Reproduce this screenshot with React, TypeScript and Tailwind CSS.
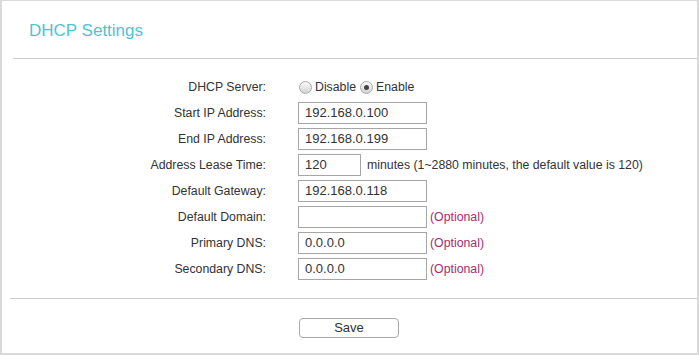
import React from "react";

const rows: { label: string; value?: string; width?: string; note?: string; optional?: boolean }[] = [
    { label: "Start IP Address:", value: "192.168.0.100" },
    { label: "End IP Address:", value: "192.168.0.199" },
    {
        label: "Address Lease Time:",
        value: "120",
        width: "w-[63px]",
        note: "minutes (1~2880 minutes, the default value is 120)",
    },
    { label: "Default Gateway:", value: "192.168.0.118" },
    { label: "Default Domain:", value: "", optional: true },
    { label: "Primary DNS:", value: "0.0.0.0", optional: true },
    { label: "Secondary DNS:", value: "0.0.0.0", optional: true },
];

const Radio = ({ checked }: { checked?: boolean }) => (
    <span className="inline-flex h-[13px] w-[13px] items-center justify-center rounded-full border border-[#a9a9a9] bg-gradient-to-b from-[#fafafa] to-[#d4d4d4]">
        {checked && <span className="h-[5px] w-[5px] rounded-full bg-[#444]" />}
    </span>
);

const App = () => {
    return (
        <div
            className="flex h-[355px] w-[699px] flex-col border-x-2 border-b-2 border-t border-[#dadada] bg-white text-[12.3px] text-[#333]"
            style={{ fontFamily: '"Liberation Sans", Arial, sans-serif' }}
        >
            <h2 className="h-[57px] pl-[27px] pt-[21px] text-[17px] leading-[18px] text-[#4ec4d3]">
                DHCP Settings
            </h2>
            <div className="ml-[11px] h-px bg-[#cccccc]" />

            <div className="mt-[15px] flex flex-col">
                <div className="flex h-[26px] items-center">
                    <div className="w-[264px] text-right">DHCP Server:</div>
                    <div className="ml-[33px] flex items-center">
                        <Radio />
                        <span className="ml-[3px]">Disable</span>
                        <span className="ml-[4px] flex items-center">
                            <Radio checked />
                        </span>
                        <span className="ml-[3px]">Enable</span>
                    </div>
                </div>
                {rows.map((row) => (
                    <div key={row.label} className="flex h-[26px] items-center">
                        <div className="w-[264px] text-right">{row.label}</div>
                        <div
                            className={`ml-[32px] flex h-[22px] items-center border border-[#a6a6a6] px-[6px] text-[13px] ${row.width ?? "w-[129px]"}`}
                        >
                            {row.value}
                        </div>
                        {row.note && <span className="ml-[6px]">{row.note}</span>}
                        {row.optional && (
                            <span className="ml-[3px] text-[#a3306c]">(Optional)</span>
                        )}
                    </div>
                ))}
            </div>

            <div className="ml-[8px] mt-[16px] h-px bg-[#cccccc]" />

            <div className="mt-[19px] pl-[297px]">
                <button className="flex h-[20px] w-[100px] items-center justify-center rounded-[4px] border border-[#a8a8a8] bg-white text-[13px] text-[#333]">
                    Save
                </button>
            </div>
        </div>
    );
};

export default App;
